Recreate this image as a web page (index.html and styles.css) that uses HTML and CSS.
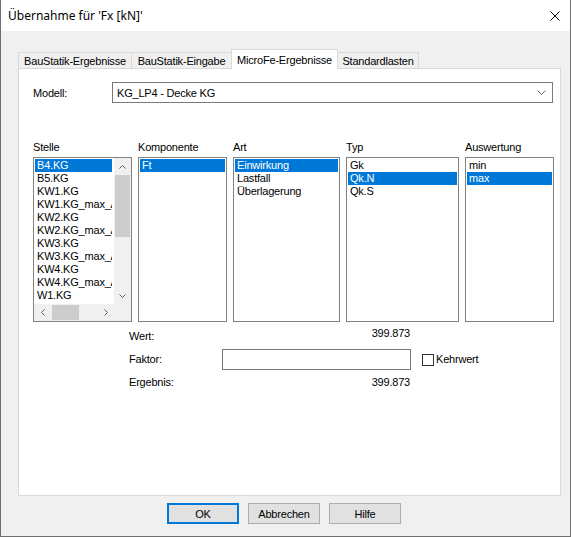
FILE: index.html
```html
<!DOCTYPE html>
<html lang="de">
<head>
<meta charset="utf-8">
<title>Übernahme</title>
<link rel="stylesheet" href="styles.css">
</head>
<body>
<div class="window">
  <div class="titlebar">
    <span class="title">Übernahme für 'Fx [kN]'</span>
    <svg class="close" width="10" height="10" viewBox="0 0 10 10"><path d="M0.5 0.5 L9.5 9.5 M9.5 0.5 L0.5 9.5" stroke="#000" stroke-width="1" fill="none"/></svg>
  </div>
  <div class="client">
    <div class="tabs">
      <div class="tab t1">BauStatik-Ergebnisse</div>
      <div class="tab t2">BauStatik-Eingabe</div>
      <div class="tab t3 active">MicroFe-Ergebnisse</div>
      <div class="tab t4">Standardlasten</div>
    </div>
    <div class="panel">
      <div class="model-row">
        <span class="model-label">Modell:</span>
        <div class="combo">
          <span>KG_LP4 - Decke KG</span>
          <svg width="9" height="5" viewBox="0 0 9 5"><path d="M0.5 0.5 L4.5 4.5 L8.5 0.5" stroke="#6d6d6d" stroke-width="1" fill="none"/></svg>
        </div>
      </div>
      <div class="lists">
        <div class="col c-stelle">
          <div class="col-label">Stelle</div>
          <div class="listbox scrolled">
            <div class="items">
              <div class="item sel">B4.KG</div>
              <div class="item">B5.KG</div>
              <div class="item">KW1.KG</div>
              <div class="item">KW1.KG_max_A</div>
              <div class="item">KW2.KG</div>
              <div class="item">KW2.KG_max_A</div>
              <div class="item">KW3.KG</div>
              <div class="item">KW3.KG_max_A</div>
              <div class="item">KW4.KG</div>
              <div class="item">KW4.KG_max_A</div>
              <div class="item">W1.KG</div>
            </div>
            <div class="vscroll">
              <div class="sb-btn"><svg width="7" height="4" viewBox="0 0 7 4"><path d="M0.5 3.5 L3.5 0.5 L6.5 3.5" stroke="#606060" fill="none"/></svg></div>
              <div class="vthumb"></div>
              <div class="vtrack"></div>
              <div class="sb-btn"><svg width="7" height="4" viewBox="0 0 7 4"><path d="M0.5 0.5 L3.5 3.5 L6.5 0.5" stroke="#606060" fill="none"/></svg></div>
            </div>
            <div class="hscroll">
              <div class="sb-btn"><svg width="4" height="7" viewBox="0 0 4 7"><path d="M3.5 0.5 L0.5 3.5 L3.5 6.5" stroke="#606060" fill="none"/></svg></div>
              <div class="hthumb"></div>
              <div class="htrack"></div>
              <div class="sb-btn"><svg width="4" height="7" viewBox="0 0 4 7"><path d="M0.5 0.5 L3.5 3.5 L0.5 6.5" stroke="#606060" fill="none"/></svg></div>
            </div>
            <div class="corner"></div>
          </div>
        </div>
        <div class="col c-komp">
          <div class="col-label">Komponente</div>
          <div class="listbox">
            <div class="item sel">Ft</div>
          </div>
        </div>
        <div class="col c-art">
          <div class="col-label">Art</div>
          <div class="listbox">
            <div class="item sel">Einwirkung</div>
            <div class="item">Lastfall</div>
            <div class="item">Überlagerung</div>
          </div>
        </div>
        <div class="col c-typ">
          <div class="col-label">Typ</div>
          <div class="listbox">
            <div class="item">Gk</div>
            <div class="item sel">Qk.N</div>
            <div class="item">Qk.S</div>
          </div>
        </div>
        <div class="col c-aus">
          <div class="col-label">Auswertung</div>
          <div class="listbox">
            <div class="item">min</div>
            <div class="item sel">max</div>
          </div>
        </div>
      </div>
      <div class="values">
        <span class="v-label">Wert:</span>
        <span class="v-num wert-val">399.873</span>
        <span></span>
        <span class="v-label">Faktor:</span>
        <div class="input"></div>
        <label class="check"><span class="box"></span><span>Kehrwert</span></label>
        <span class="v-label">Ergebnis:</span>
        <span class="v-num">399.873</span>
        <span></span>
      </div>
    </div>
    <div class="buttons">
      <div class="btn default">OK</div>
      <div class="btn">Abbrechen</div>
      <div class="btn">Hilfe</div>
    </div>
  </div>
</div>
</body>
</html>
```
FILE: styles.css
```css
* { box-sizing: border-box; }
html, body { margin: 0; padding: 0; }
body {
  width: 571px;
  height: 537px;
  overflow: hidden;
  background: #fff;
  font-family: "Liberation Sans", Arial, sans-serif;
  font-size: 11px;
  letter-spacing: -0.2px;
  color: #000;
}
.window {
  width: 571px;
  height: 537px;
  border: 1px solid #707070;
  border-top: none;
  display: flex;
  flex-direction: column;
}
.titlebar {
  height: 31px;
  flex: none;
  background: #fff;
  display: flex;
  align-items: center;
  justify-content: space-between;
  padding: 0 10px 0 7px;
  font-family: "Noto Sans", "Liberation Sans", sans-serif;
  font-size: 12px;
  letter-spacing: 0;
}
.close { display: block; }
.client {
  flex: 1;
  background: #f0f0f0;
  padding: 18px 9px 0 17px;
}
.tabs {
  display: flex;
  align-items: flex-end;
  height: 19px;
}
.tab {
  height: 16px;
  border: 1px solid #d9d9d9;
  border-bottom: none;
  background: #f0f0f0;
  display: flex;
  align-items: center;
  justify-content: center;
  padding-top: 1px;
  white-space: nowrap;
}
.tab + .tab { margin-left: -1px; }
.t1 { width: 114px; }
.t2 { width: 101px; }
.t3 { width: 107px; }
.t4 { width: 82px; }
.tab.active {
  height: 20px;
  margin-bottom: -1px;
  background: #fff;
  position: relative;
  z-index: 1;
  padding-top: 0;
}
.panel {
  height: 428px;
  border: 1px solid #d9d9d9;
  background: #fff;
  padding: 0 4px 0 14px;
}
.model-row {
  margin-top: 13px;
  display: flex;
  align-items: center;
  height: 21px;
}
.model-label { width: 79px; }
.combo {
  width: 441px;
  height: 21px;
  border: 1px solid #7a7a7a;
  display: flex;
  align-items: center;
  justify-content: space-between;
  padding: 0 6px 0 4px;
}
.combo svg { display: block; }
.lists {
  display: flex;
  gap: 6px;
  margin-top: 38px;
}
.col-label {
  height: 13px;
  line-height: 13px;
  margin-bottom: 3px;
  white-space: nowrap;
}
.c-stelle { width: 99px; }
.c-komp { width: 89px; }
.c-art { width: 107px; }
.c-typ { width: 113px; }
.c-aus { width: 89px; }
.listbox {
  height: 165px;
  border: 1px solid #828282;
  padding: 1px;
  background: #fff;
  overflow: hidden;
}
.item {
  height: 13px;
  line-height: 13px;
  padding-left: 2px;
  white-space: nowrap;
  overflow: hidden;
}
.item.sel { background: #0078d7; color: #fff; }
.listbox.scrolled {
  padding: 0;
  display: grid;
  grid-template-columns: 1fr 17px;
  grid-template-rows: 1fr 17px;
}
.items {
  padding: 1px 2px 1px 1px;
  overflow: hidden;
}
.vscroll {
  background: #f0f0f0;
  display: flex;
  flex-direction: column;
}
.hscroll {
  background: #f0f0f0;
  display: flex;
}
.sb-btn {
  width: 17px;
  height: 17px;
  flex: none;
  display: flex;
  align-items: center;
  justify-content: center;
}
.sb-btn svg { display: block; }
.vthumb {
  height: 62px;
  margin: 0 1px;
  background: #cdcdcd;
  flex: none;
}
.vtrack { flex: 1; }
.hthumb {
  width: 27px;
  margin: 1px 0 1px 1px;
  background: #cdcdcd;
  flex: none;
}
.htrack { flex: 1; }
.corner { background: #f0f0f0; }
.values {
  display: grid;
  grid-template-columns: 93px 189px auto;
  grid-template-rows: 13px 21px 13px;
  row-gap: 6px;
  margin-top: 8px;
  margin-left: 96px;
  align-items: center;
  line-height: 13px;
}
.v-num {
  text-align: right;
  padding-right: 1px;
}
.wert-val {
  align-self: start;
  margin-top: -3px;
}
.input {
  height: 21px;
  border: 1px solid #7a7a7a;
  background: #fff;
}
.check {
  display: flex;
  align-items: center;
  margin-left: 11px;
}
.box {
  width: 12px;
  height: 12px;
  border: 1px solid #333;
  background: #fff;
  margin-right: 2px;
}
.buttons {
  display: flex;
  gap: 9px;
  margin-top: 7px;
  margin-left: 149px;
}
.btn {
  width: 72px;
  height: 21px;
  background: #e1e1e1;
  border: 1px solid #adadad;
  display: flex;
  align-items: center;
  justify-content: center;
}
.btn.default { border: 2px solid #0078d7; }
```
